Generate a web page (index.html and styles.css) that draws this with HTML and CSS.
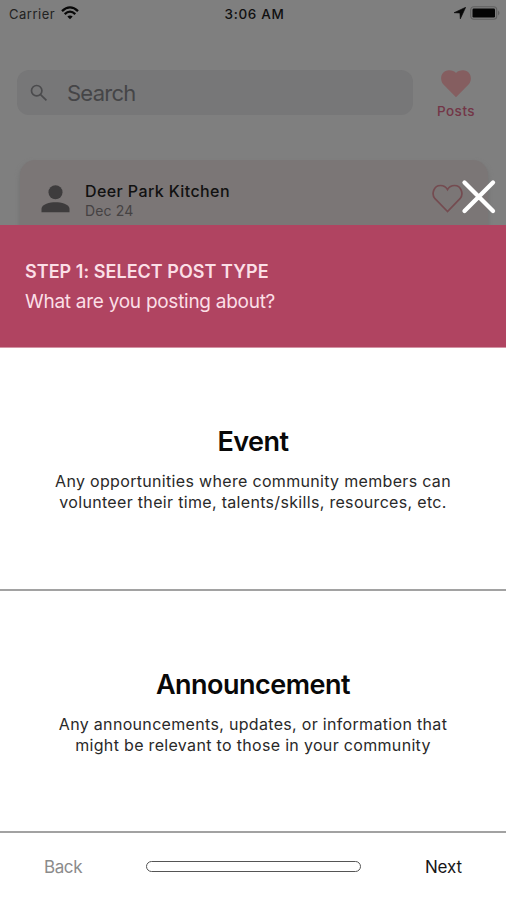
FILE: index.html
```html
<!DOCTYPE html>
<html lang="en">
<head>
<meta charset="utf-8">
<title>New post</title>
<link rel="stylesheet" href="styles.css">
</head>
<body>
<main class="screen">
  <section class="feed">
    <div class="status">
      <div class="status-left"><span class="carrier">Carrier</span>
        <svg class="wifi" width="18" height="14" viewBox="0 0 18 14" fill="none" stroke="#080808" stroke-width="2.3"><path d="M1 5.1Q9-2.3 17 5.1"/><path d="M3.7 8.1Q9 3.2 14.3 8.1"/><path d="M9 13.3 6.3 10.6Q9 8.3 11.7 10.6Z" fill="#080808" stroke="none"/></svg>
      </div>
      <time class="clock">3:06 AM</time>
      <div class="status-right">
        <svg width="12" height="12" viewBox="0 0 12 12"><path d="M11.7.3 0 5.7l5.9.3.4 5.9z" fill="#080808" stroke="#080808" stroke-width=".6"/></svg>
        <svg width="30" height="14" viewBox="0 0 30 14"><rect x=".7" y=".7" width="26" height="12.6" rx="3" fill="none" stroke="#606060" stroke-width="1.1"/><rect x="2.5" y="2.5" width="22.5" height="9" rx="1.2" fill="#050505"/><path d="M28 4.5q3 2.5 0 5z" fill="#606060"/></svg>
      </div>
    </div>
    <div class="toolbar">
      <div class="search">
        <svg width="18" height="18" viewBox="0 0 18 18" fill="none" stroke="#4b4b4d" stroke-width="1.7"><circle cx="6.7" cy="6.7" r="5.2"/><path d="m10.6 10.6 5.8 5.8"/></svg>
        <span class="search-text">Search</span>
      </div>
      <div class="posts">
        <svg width="30" height="28" viewBox="0 0 30 28"><path d="M15 27.3 2.2 14.2C-2 9.2.4.3 8 .3c3 0 5.600 1 7 2.700C16.400 1.300 19 .3 22 .3c7.600 0 10 8.900 5.800 13.900z" fill="#855e60"/></svg>
        <span class="posts-text">Posts</span>
      </div>
    </div>
    <article class="card">
      <svg class="avatar" width="29" height="28" viewBox="0 0 29 28" fill="#3e3c3d"><circle cx="14.500" cy="7.200" r="7"/><path d="M.5 27.300v-3.500c0-4.700 8.500-6.600 14-6.600s14 1.900 14 6.600v3.500z"/></svg>
      <div class="author"><strong class="name">Deer Park Kitchen</strong><span class="date">Dec 24</span></div>
      <svg class="like" width="31" height="29" viewBox="0 0 31 29"><path d="M15.500 27.500 3 14.700C-1 10 1.800 1.500 8.500 1.500c3 0 5.500 1.500 7 4 1.500-2.500 4-4 7-4 6.700 0 9.500 8.500 5.500 13.200z" fill="none" stroke="#744b50" stroke-width="1.700"/></svg>
    </article>
    <svg class="close" width="36" height="36" viewBox="0 0 36 36" stroke="#fff" stroke-width="4.300" stroke-linecap="round"><path d="m3.500 3.500 28.500 28.500M32 3.500 3.500 32"/></svg>
  </section>
  <header class="step"><h1 class="step-title">STEP 1: SELECT POST TYPE</h1><p class="step-text">What are you posting about?</p></header>
  <section class="option">
    <h2 class="option-title">Event</h2>
    <p class="copy">Any opportunities where community members can<br>volunteer their time, talents/skills, resources, etc.</p>
  </section>
  <section class="option">
    <h2 class="option-title">Announcement</h2>
    <p class="copy">Any announcements, updates, or information that<br>might be relevant to those in your community</p>
  </section>
  <footer class="nav"><span class="back">Back</span><div class="progress"></div><span class="next">Next</span></footer>
</main>
</body>
</html>
```
FILE: styles.css
```css
* { box-sizing: border-box; }
body, h1, h2, p { margin: 0; }
body { font-family: Inter, "Liberation Sans", sans-serif; background: #fff; color: #111; }
svg { display: block; flex: none; }
.screen { width: 506px; height: 900px; display: flex; flex-direction: column; overflow: hidden; white-space: nowrap; }
.feed { position: relative; height: 225px; flex: none; background: #7f7f7f; overflow: hidden; }
.status { height: 26px; display: grid; grid-template-columns: 1fr auto 1fr; align-items: center; padding: 0 6px 0 9px; }
.status-left, .status-right { display: flex; align-items: center; gap: 6px; }
.status-right { justify-content: flex-end; gap: 4px; }
.carrier { font-size: 13px; line-height: 16px; padding-top: 1px; letter-spacing: .5px; color: #222; }
.clock { font-size: 13.5px; line-height: 16px; padding-top: 1px; font-weight: 500; letter-spacing: .65px; color: #101010; }
.toolbar { display: flex; height: 90px; padding: 44px 30px 0 17px; justify-content: space-between; }
.search { width: 396px; height: 45px; display: flex; align-items: center; padding: 1px 0 0 13px; gap: 19px; border-radius: 12px; background: #777778; }
.search-text { font-size: 22px; line-height: 28px; color: #454547; letter-spacing: -.75px; }
.posts { width: 40px; display: flex; flex-direction: column; align-items: center; gap: 5px; }
.posts-text { font-size: 13.5px; line-height: 17px; font-weight: 500; color: #733647; letter-spacing: .5px; }
.card { height: 110px; margin: 44px 18px 0 20px; padding: 20px 25px 0 21px; display: flex; align-items: flex-start; border-radius: 15px; background: #7b7676; box-shadow: 0 3px 5px #707070; }
.avatar { margin-top: 5px; }
.author { display: flex; flex-direction: column; flex: 1; padding-left: 15px; }
.name { font-size: 16px; line-height: 22px; font-weight: 500; color: #111; letter-spacing: .4px; }
.date { font-size: 14px; line-height: 18px; color: #454243; letter-spacing: .15px; }
.like { margin-top: 4px; }
.close { position: absolute; left: 461px; top: 179px; }
.step { height: 123px; flex: none; background: #b04461; border-bottom: 1px solid #d394a4; padding: 34px 25px 0; color: #fbdfe6; }
.step-title { font-size: 18px; line-height: 25px; font-weight: 600; letter-spacing: .03px; }
.step-text { font-size: 19px; line-height: 26px; margin-top: 5px; letter-spacing: -.27px; }
.option { height: 243px; flex: none; border-bottom: 2px solid #a2a2a2; text-align: center; padding-top: 76px; }
.option + .option { height: 242px; }
.option-title { font-size: 27px; line-height: 36px; font-weight: 600; letter-spacing: -.5px; color: #080808; }
.copy { margin-top: 11px; font-size: 16px; line-height: 21px; letter-spacing: .32px; color: #292929; }
.nav { flex: 1; display: flex; align-items: flex-start; justify-content: space-between; padding: 22px 44px 0; font-size: 17px; line-height: 24px; }
.back { color: #8b8b8b; letter-spacing: -.4px; }
.next { color: #171717; letter-spacing: -.1px; }
.progress { width: 215px; height: 11px; margin-top: 6px; border: 1.5px solid #555; border-radius: 6px; }
```
